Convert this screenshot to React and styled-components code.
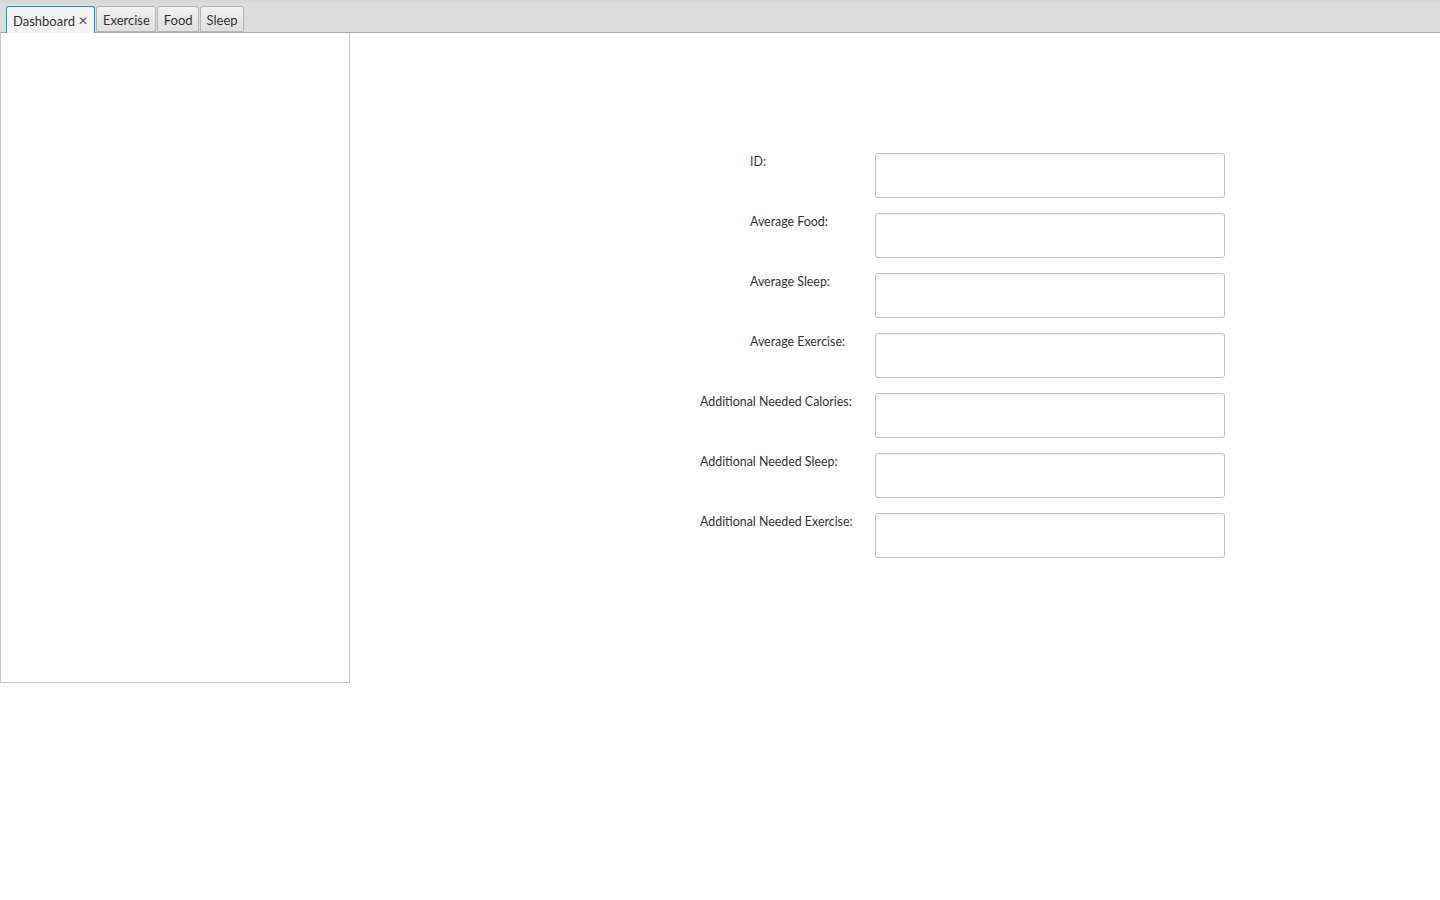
import React, {useState} from 'react';
import styled, {createGlobalStyle} from 'styled-components';

const GlobalStyle = createGlobalStyle`
  html, body { margin: 0; padding: 0; background: #ffffff; }
  body { font-family: Lato, 'Liberation Sans', Arial, sans-serif; font-size: 13px; color: #333; }
`;

const fields = [
  {label: 'ID:', indent: 50},
  {label: 'Average Food:', indent: 50},
  {label: 'Average Sleep:', indent: 50},
  {label: 'Average Exercise:', indent: 50},
  {label: 'Additional Needed Calories:', indent: 0},
  {label: 'Additional Needed Sleep:', indent: 0},
  {label: 'Additional Needed Exercise:', indent: 0},
];

const tabs = ['Dashboard', 'Exercise', 'Food', 'Sleep'];

const Page = styled.div`
  width: 1440px;
  height: 900px;
  display: flex;
  flex-direction: column;
  background: #fff;
`;

const TabBar = styled.div`
  height: 32px;
  flex: none;
  display: flex;
  align-items: flex-end;
  gap: 1px;
  padding-left: 6px;
  background: linear-gradient(#d6d6d6 0px, #dcdcdc 4px, #dddddd 100%);
  border-bottom: 1px solid #ababab;
  box-sizing: content-box;
`;

const Tab = styled.div`
  height: ${p => (p.$active ? '27px' : '26px')};
  margin-bottom: ${p => (p.$active ? '-1px' : '0')};
  box-sizing: border-box;
  padding: 1px ${p => (p.$active ? '6px' : '5px')} 0 6px;
  display: flex;
  align-items: center;
  gap: 3px;
  font-size: 13px;
  color: #333;
  border: 1px solid ${p => (p.$active ? '#039ed3' : '#b5b5b5')};
  border-bottom: ${p => (p.$active ? 'none' : '1px solid #b5b5b5')};
  border-radius: 3px 3px 0 0;
  background: ${p => (p.$active ? '#f4f4f4' : 'linear-gradient(#f0f0f0, #e0e0e0)')};
  cursor: default;
`;

const Close = styled.span`
  font-size: 12px;
  color: #555;
  line-height: 1;
`;

const Body = styled.div`
  flex: 1;
  display: flex;
  align-items: flex-start;
`;

const SidePanel = styled.div`
  width: 350px;
  height: 650px;
  box-sizing: border-box;
  border: 1px solid #c8c8c8;
  border-top: none;
  background: #fff;
`;

const Form = styled.div`
  margin-left: 350px;
  margin-top: 120px;
  display: grid;
  grid-template-columns: 175px 350px;
  row-gap: 15px;
`;

const Label = styled.label`
  padding-left: ${p => p.$indent}px;
  padding-top: 1px;
  font-size: 12.4px;
  color: #333;
  white-space: nowrap;
`;

const Input = styled.input`
  width: 350px;
  height: 45px;
  box-sizing: border-box;
  border: 1px solid #c2c2c2;
  border-radius: 3px;
  background: linear-gradient(#f4f4f4 0px, #ffffff 3px);
  outline: none;
  padding: 0 7px;
  font-family: inherit;
  font-size: 13px;
`;

export default function App() {
  const [active, setActive] = useState(0);

  return (
    <>
      <GlobalStyle />
      <Page>
        <TabBar>
          {tabs.map((t, i) => (
            <Tab key={t} $active={i === active} onClick={() => setActive(i)}>
              {t}
              {i === 0 && <Close>✕</Close>}
            </Tab>
          ))}
        </TabBar>
        <Body>
          <SidePanel />
          <Form>
            {fields.map(f => (
              <React.Fragment key={f.label}>
                <Label $indent={f.indent}>{f.label}</Label>
                <Input />
              </React.Fragment>
            ))}
          </Form>
        </Body>
      </Page>
    </>
  );
}
